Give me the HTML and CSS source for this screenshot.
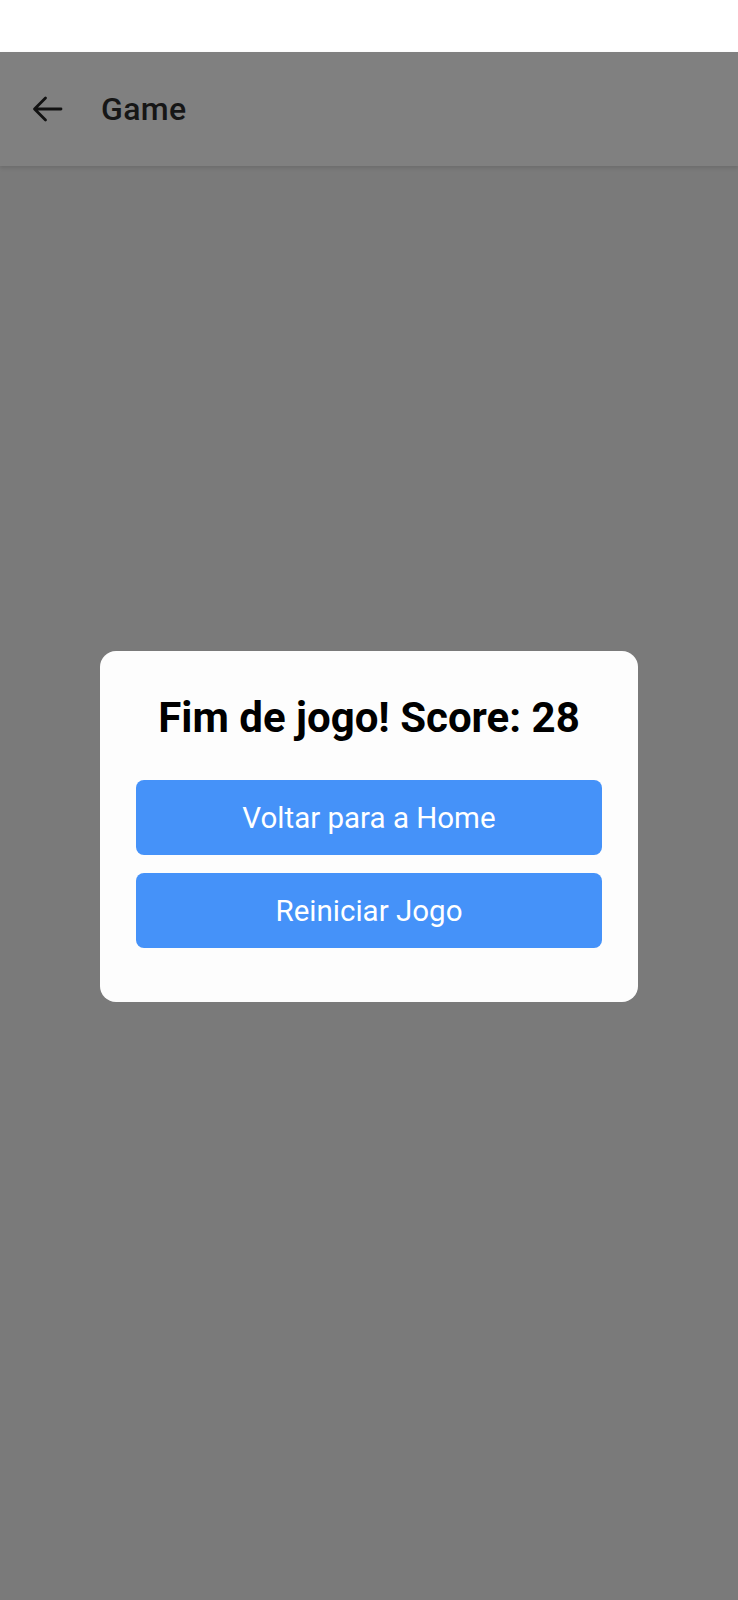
FILE: index.html
```html
<!DOCTYPE html>
<html lang="pt">
<head>
<meta charset="utf-8">
<link rel="stylesheet" href="styles.css">
</head>
<body>
<div class="status"></div>
<header class="appbar">
  <svg class="back" width="32" height="28" viewBox="0 0 32 28"><path d="M30 14H4M14.5 3L3.5 14L14.5 25" fill="none" stroke="#111" stroke-width="2.8" stroke-linecap="round" stroke-linejoin="round"/></svg>
  <span class="title">Game</span>
</header>
<main class="content">
  <div class="dialog">
    <h1 class="dtitle">Fim de jogo! Score: 28</h1>
    <button class="btn">Voltar para a Home</button>
    <button class="btn">Reiniciar Jogo</button>
  </div>
</main>
</body>
</html>
```
FILE: styles.css
```css
html, body { margin: 0; padding: 0; }
body {
  width: 738px;
  height: 1600px;
  background: #7a7a7a;
  font-family: Roboto, "Noto Sans", sans-serif;
  display: flex;
  flex-direction: column;
  overflow: hidden;
}
.status { height: 52px; background: #ffffff; flex: none; }
.appbar {
  height: 114px;
  flex: none;
  background: #808080;
  display: flex;
  align-items: center;
  padding-left: 31px;
  box-shadow: 0 2px 4px rgba(0,0,0,0.12);
  position: relative;
  z-index: 1;
}
.back { display: block; }
.title {
  margin-left: 38px;
  font-size: 32px;
  font-weight: 500;
  color: #161616;
  letter-spacing: 0.4px;
  -webkit-text-stroke: 0;
}
.content {
  flex: 1;
  display: flex;
  justify-content: center;
  padding-top: 485px;
  align-items: flex-start;
}
.dialog {
  width: 538px;
  box-sizing: border-box;
  background: #fdfdfd;
  border-radius: 16px;
  padding: 39px 36px 54px;
  display: flex;
  flex-direction: column;
  gap: 18px;
}
.dtitle {
  margin: 0 0 16px;
  text-align: center;
  font-size: 42px;
  font-weight: 700;
  color: #000;
  line-height: 56px;
}
.btn {
  height: 75px;
  border: none;
  border-radius: 8px;
  background: #4592f9;
  color: #fff;
  font-family: Roboto, "Noto Sans", sans-serif;
  font-size: 29.5px;
  font-weight: 400;
  padding: 0;
}
```
